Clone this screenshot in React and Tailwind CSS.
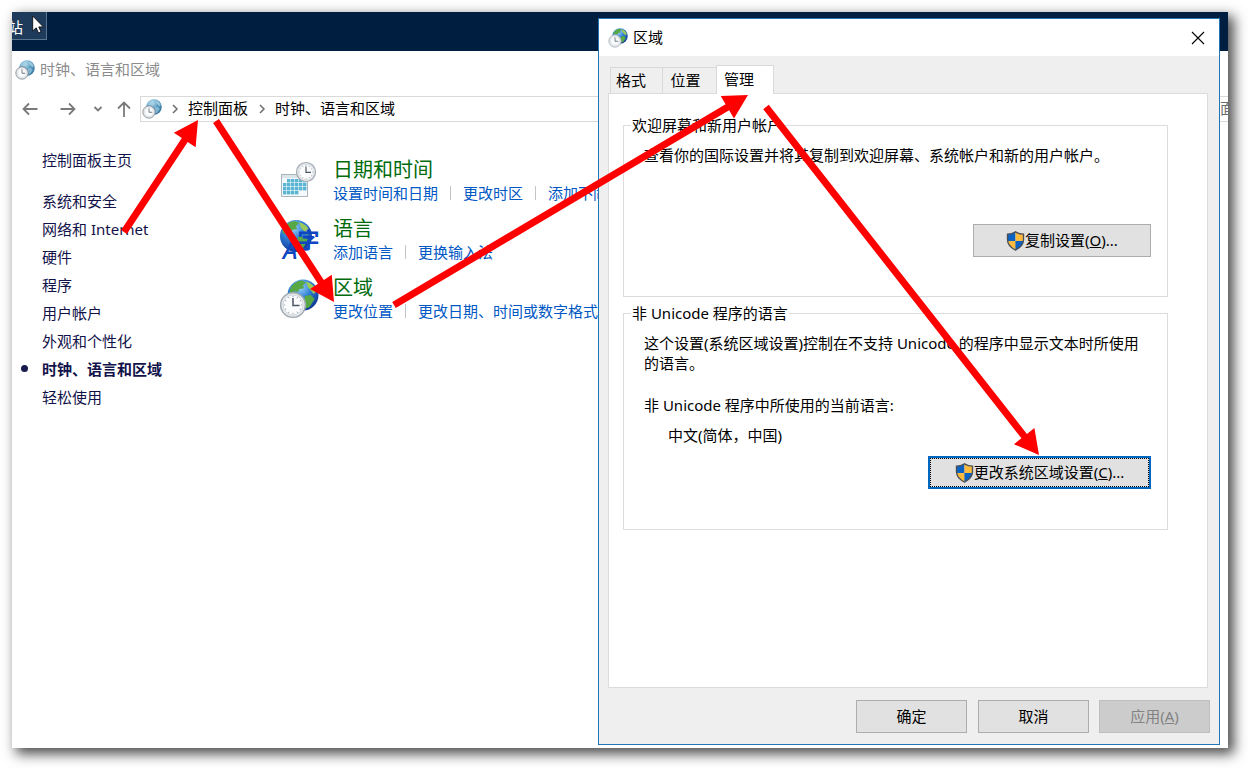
import React from "react";

const FONT = "font-['Noto_Sans','Noto_Sans_CJK_SC',sans-serif]";

function Globe({ id, cx, cy, r, pale }) {
  return (
    <g>
      <defs>
        <radialGradient id={id} cx="0.4" cy="0.25" r="0.8">
          <stop offset="0" stopColor={pale ? "#b9dced" : "#9fd4f7"} />
          <stop offset="0.45" stopColor={pale ? "#5d9fc4" : "#2f7fd6"} />
          <stop offset="1" stopColor={pale ? "#2b6c98" : "#0c2f8f"} />
        </radialGradient>
      </defs>
      <circle cx={cx} cy={cy} r={r} fill={`url(#${id})`} />
      <g
        transform={`translate(${cx - r} ${cy - r}) scale(${r / 16})`}
        fill={pale ? "#a5d3e6" : "#58a845"}
        opacity={pale ? 0.6 : 1}
      >
        <path d="M4 7 Q9 1 15 1 L19 3 L16 6 L17 9 L12 10 L11 13 L7 12 L4 14 L2 12 Z" />
        <path d="M19 2 Q27 4 30 12 L27 15 L24 11 L21 8 Z" fill={pale ? "#c4e4f0" : "#9bc95a"} />
        <path d="M18 17 L24 16 L28 20 L23 28 L19 30 L17 24 Z" />
      </g>
    </g>
  );
}

function Clock({ cx, cy, r, rim = "#a3abb2" }) {
  const ticks = [0, 30, 60, 90, 120, 150, 180, 210, 240, 270, 300, 330];
  return (
    <g transform={`translate(${cx} ${cy}) scale(${r / 12})`}>
      <circle r="11.4" fill="#e8ebee" stroke={rim} strokeWidth="1.4" />
      <circle r="9.2" fill="#fbfcfd" stroke="#cdd3d8" strokeWidth="0.8" />
      {ticks.map((a) => (
        <path key={a} d="M0 -8.4V-7.2" stroke="#8f9aa4" strokeWidth="0.8" transform={`rotate(${a})`} />
      ))}
      <path d="M0 -6.5V0.5H6" fill="none" stroke="#4b5663" strokeWidth="1.4" />
    </g>
  );
}

function ClockGlobe({ id, className, pale }) {
  return (
    <svg viewBox="0 0 40 40" className={className} aria-hidden="true">
      <Globe id={id} cx={24} cy={16} r={15.5} pale={pale} />
      <Clock cx={14} cy={26} r={13} rim={pale ? "#6f7a83" : "#a3abb2"} />
    </svg>
  );
}

function CalendarIcon() {
  return (
    <svg viewBox="0 0 40 40" className="size-10" aria-hidden="true">
      <rect x="2.5" y="13.5" width="26" height="22" fill="#f5f9fb" stroke="#a9b4bb" />
      <rect x="3" y="14" width="25" height="3" fill="#dbe4e8" />
      <g fill="#59b5d3">
        {[18, 22, 26, 30].map((y, r) =>
          [4, 8, 12, 16, 20, 24].map((x, c) =>
            (r === 0 && c < 1) || (r === 3 && c > 3) ? null : <rect key={`${x}-${y}`} x={x} y={y} width="3.4" height="3.4" />
          )
        )}
      </g>
      <Clock cx={27} cy={11} r={10} />
    </svg>
  );
}

function LanguageIcon() {
  return (
    <svg viewBox="0 0 40 40" className="size-10 overflow-visible" aria-hidden="true">
      <Globe id="g-lang" cx={17} cy={16} r={16} />
      <g fill="#0d46c0" fontWeight="700">
        <text x="4" y="39" fontSize="25" fontStyle="italic" fontWeight="500">A</text>
        <text x="18.5" y="28" fontSize="22">字</text>
      </g>
    </svg>
  );
}

function Shield() {
  return (
    <svg viewBox="0 0 20 22" className="h-5 w-[19px] shrink-0" aria-hidden="true">
      <path d="M10 1 Q6 3.5 1.2 3.5 V10 Q1.5 17 10 21 Z" fill="#0a63c4" />
      <path d="M10 1 Q14 3.5 18.8 3.5 V10 Q18.5 17 10 21 Z" fill="#fdbb3e" />
      <path d="M1.2 11 H10 V21 Q2.5 17.5 1.2 11Z" fill="#fdbb3e" />
      <path d="M18.8 11 H10 V21 Q17.5 17.5 18.8 11Z" fill="#0a63c4" />
      <path d="M10 1 Q6 3.5 1.2 3.5 V10 Q1.5 17 10 21 Q18.5 17 18.8 10 V3.5 Q14 3.5 10 1Z" fill="none" stroke="#4b4f55" strokeWidth="1.5" />
    </svg>
  );
}

const NAV = ["系统和安全", "网络和 Internet", "硬件", "程序", "用户帐户", "外观和个性化", "时钟、语言和区域", "轻松使用"];

const CATEGORIES = [
  { title: "日期和时间", icon: <CalendarIcon />, links: ["设置时间和日期", "更改时区", "添加不同时区的时钟"] },
  { title: "语言", icon: <LanguageIcon />, links: ["添加语言", "更换输入法"] },
  { title: "区域", icon: <ClockGlobe id="g-region" className="size-10" />, links: ["更改位置", "更改日期、时间或数字格式"] },
];

function NavIcon({ d, label, className }) {
  return (
    <button type="button" aria-label={label} className={className}>
      <svg viewBox="0 0 16 16" className="size-4" fill="none" stroke="#7a7a7a" strokeWidth="1.8" aria-hidden="true">
        <path d={d} />
      </svg>
    </button>
  );
}

function Chevron() {
  return (
    <svg viewBox="0 0 8 10" className="h-[10px] w-2" fill="none" stroke="#6d6d6d" strokeWidth="1.5" aria-hidden="true">
      <path d="M2 1 L6 5 L2 9" />
    </svg>
  );
}

function Explorer() {
  return (
    <section className="col-start-1 row-start-1 mt-[39px] min-w-0 bg-white">
      <header className="flex h-[37px] items-center gap-[5px] pl-[3px] text-[#8c8c8c]">
        <ClockGlobe id="g-title" className="size-5" pale />
        <span>时钟、语言和区域</span>
      </header>
      <div className="mt-2 flex h-[26px] items-center">
        <NavIcon label="后退" className="ml-[10px]" d="M15.5 8H1.5M7 2.5L1.5 8L7 13.5" />
        <NavIcon label="前进" className="ml-[22px]" d="M0.5 8H14.5M9 2.5L14.5 8L9 13.5" />
        <NavIcon label="最近位置" className="ml-[14px]" d="M4.5 6L8 9.5L11.5 6" />
        <NavIcon label="向上" className="ml-[10px]" d="M8 16V1.5M2 7.5L8 1.5L14 7.5" />
        <nav aria-label="地址" className="-mr-2 ml-2 flex h-[26px] flex-1 items-center border border-[#d9d9d9] pb-px pl-px">
          <ClockGlobe id="g-addr" className="mr-[9px] size-5" pale />
          <Chevron />
          <a href="#panel" className="mr-[10px] ml-[9px] text-black">控制面板</a>
          <Chevron />
          <a href="#clock" className="ml-[9px] text-black">时钟、语言和区域</a>
          <span className="ml-auto text-[#6c6c6c]">面</span>
        </nav>
      </div>
      <div className="flex pt-6">
        <nav aria-label="控制面板" className="w-[267px] shrink-0 pl-[30px] text-[#12124a]">
          <a href="#home" className="block leading-7">控制面板主页</a>
          <ul className="mt-[13px]">
            {NAV.map((t) => (
              <li key={t} className="relative leading-7">
                {t === "时钟、语言和区域" && <span className="absolute top-[10px] -left-[21px] size-[7px] rounded-full bg-[#1a1a4e]" />}
                <a href="#nav" className={t === "时钟、语言和区域" ? "font-bold" : ""}>{t}</a>
              </li>
            ))}
          </ul>
        </nav>
        <div className="min-w-0 pt-[11px]">
          {CATEGORIES.map((c) => (
            <div key={c.title} className="flex h-[59px] gap-[14px]">
              <div className="mt-1">{c.icon}</div>
              <div className="whitespace-nowrap">
                <h2 className="text-[20px] leading-[25px] text-[#006b0c]">{c.title}</h2>
                <div className="flex items-center leading-[22px] text-[#0058c4]">
                  {c.links.map((l, i) => (
                    <React.Fragment key={l}>
                      {i > 0 && <span className="mx-[12px] h-[14px] w-px bg-[#c4c4c4]" />}
                      <a href="#task">{l}</a>
                    </React.Fragment>
                  ))}
                </div>
              </div>
            </div>
          ))}
        </div>
      </div>
    </section>
  );
}

const BTN = "flex items-center justify-center border h-[33px]";

function Dialog() {
  return (
    <section
      role="dialog"
      aria-label="区域"
      className="z-10 col-start-1 row-start-1 mt-[6px] mr-2 mb-[3px] flex w-[622px] flex-col justify-self-end border border-[#1f75b5] bg-[#efefef]"
    >
      <header className="flex h-[37px] items-center gap-[5px] bg-white pr-[13px] pl-[9px]">
        <ClockGlobe id="g-dialog" className="size-5" />
        <h1>区域</h1>
        <button type="button" aria-label="关闭" className="ml-auto">
          <svg viewBox="0 0 16 16" className="size-4" stroke="#000" strokeWidth="1.1" aria-hidden="true">
            <path d="M2 2L14 14M14 2L2 14" />
          </svg>
        </button>
      </header>
      <div className="flex flex-1 flex-col px-[9px] pt-[9px] pb-[11px]">
        <div role="tablist" className="flex items-end pl-[2px]">
          <button role="tab" type="button" className="h-[26px] w-[53px] border border-b-0 border-[#d9d9d9] pr-[11px]">格式</button>
          <button role="tab" type="button" className="h-[26px] w-[53px] border-t border-[#d9d9d9] pr-2">位置</button>
          <button role="tab" type="button" aria-selected="true" className="z-10 -mb-px h-[29px] w-[58px] border border-b-0 border-[#d9d9d9] bg-white pr-3 pb-px">管理</button>
        </div>
        <div role="tabpanel" className="mr-[2px] flex min-h-[595px] flex-col border border-[#dcdcdc] bg-white pt-[21px] pr-[39px] pl-[14px]">
          <fieldset className="h-[182px] border border-[#dcdcdc] px-4">
            <legend className="-ml-[9px] px-px leading-5">欢迎屏幕和新用户帐户</legend>
            <p className="mt-[10px] ml-1 leading-5">查看你的国际设置并将其复制到欢迎屏幕、系统帐户和新的用户帐户。</p>
            <button type="button" className={`${BTN} mt-[59px] ml-auto w-[178px] border-[#adadad] bg-[#e1e1e1]`}>
              <Shield />
              <span>复制设置(<u>O</u>)...</span>
            </button>
          </fieldset>
          <fieldset className="mt-[6px] h-[227px] border border-[#dcdcdc] px-4">
            <legend className="-ml-[9px] px-px leading-5">非 Unicode 程序的语言</legend>
            <p className="mt-[10px] ml-1 leading-5">这个设置(系统区域设置)控制在不支持 Unicode 的程序中显示文本时所使用的语言。</p>
            <p className="mt-[22px] ml-1 leading-5">非 Unicode 程序中所使用的当前语言:</p>
            <p className="mt-[10px] ml-7 leading-5">中文(简体，中国)</p>
            <button type="button" className="mt-[11px] ml-auto flex h-[33px] w-[223px] items-center justify-center border-2 border-[#0067c0] bg-[#e1e1e1] outline-1 -outline-offset-3 outline-dotted outline-black">
              <Shield />
              <span>更改系统区域设置(<u>C</u>)...</span>
            </button>
          </fieldset>
        </div>
        <div className="mt-3 flex justify-end">
          <button type="button" className={`${BTN} mr-[11px] w-[111px] border-[#adadad] bg-[#e1e1e1]`}>确定</button>
          <button type="button" className={`${BTN} mr-[10px] w-[111px] border-[#adadad] bg-[#e1e1e1]`}>取消</button>
          <button type="button" disabled className={`${BTN} w-[111px] border-[#bfbfbf] bg-[#cccccc] text-[#838383]`}>
            <span>应用(<u>A</u>)</span>
          </button>
        </div>
      </div>
    </section>
  );
}

const ARROWS = [
  [112, 220, 186, 108],
  [204, 109, 322, 290],
  [382, 293, 736, 83],
  [754, 95, 1027, 443],
];

function Arrow({ from: [x1, y1, x2, y2] }) {
  const len = Math.hypot(x2 - x1, y2 - y1);
  const angle = (Math.atan2(y2 - y1, x2 - x1) * 180) / Math.PI;
  const neck = len - 24;
  return (
    <path
      d={`M0 -3.5H${neck}V-13L${len} 0L${neck} 13V3.5H0Z`}
      fill="#fe0000"
      transform={`translate(${x1} ${y1}) rotate(${angle})`}
    />
  );
}

export default function App() {
  return (
    <main className={`min-h-screen bg-white pt-3 pr-5 pb-5 pl-3 text-[15px] font-[380] text-black ${FONT}`}>
      <div className="shadow-[5px_5px_12px_1px_rgba(0,0,0,0.7)]">
        <div className="relative grid overflow-hidden bg-[#001e40]">
          <div className="absolute top-0 left-0 flex h-7 w-[35px] items-center border-r border-b border-[#5a7590] bg-[#1f3b5c] text-white">
            <span className="-ml-1 pt-1">站</span>
            <svg viewBox="0 0 12 19" className="absolute top-[3px] left-5 h-[19px] w-3" aria-hidden="true">
              <path d="M0.7 1V16L4.2 12.8L6.6 18L9 17L6.8 11.9H11.4Z" fill="#fff" stroke="#000" strokeWidth="0.8" />
            </svg>
          </div>
          <Explorer />
          <Dialog />
          <svg className="pointer-events-none absolute inset-0 z-20 size-full" aria-hidden="true">
            {ARROWS.map((a) => (
              <Arrow key={a[0]} from={a} />
            ))}
          </svg>
        </div>
      </div>
    </main>
  );
}
